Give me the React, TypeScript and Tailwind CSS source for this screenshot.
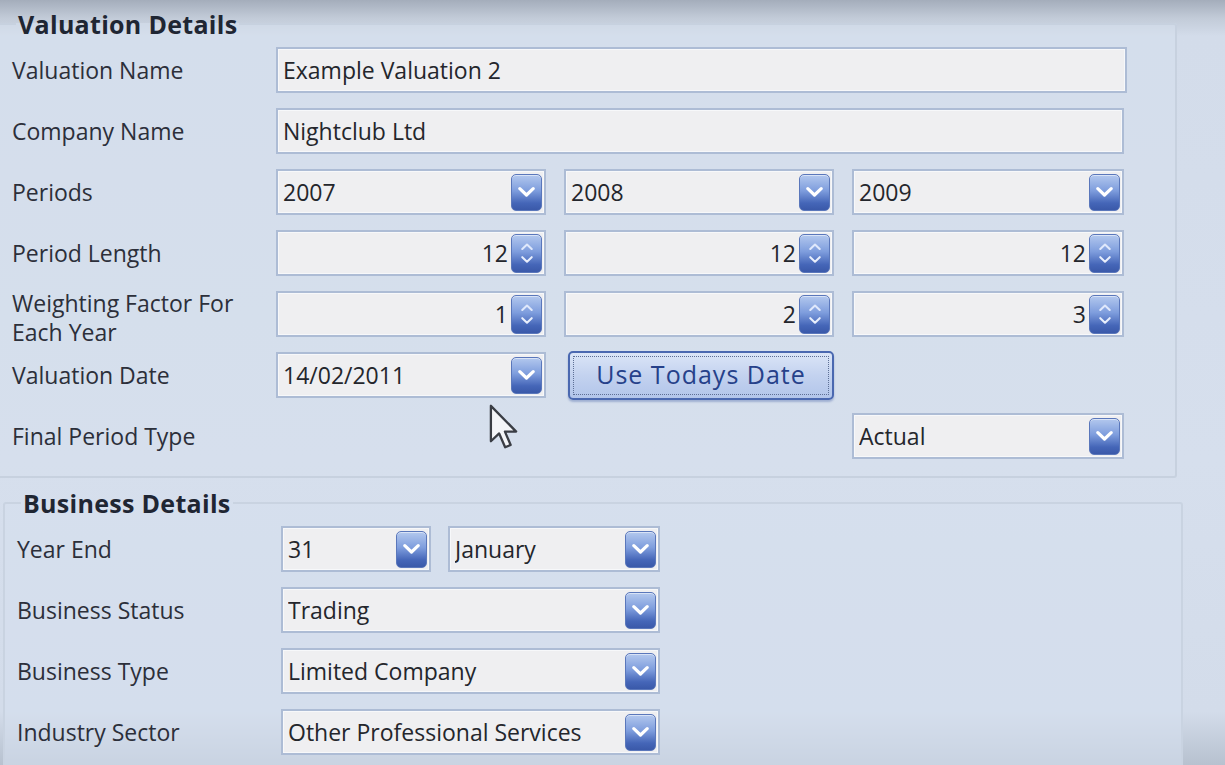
import React from "react";

const labelCls = "h-[46px] flex items-center text-[23px] text-[#2c2f3a] leading-[29px] whitespace-nowrap";

function Chevron({ up = false, size = 14, color = "#ffffff", weight = 2.4 }: { up?: boolean; size?: number; color?: string; weight?: number }) {
  const h = size * 0.6;
  return (
    <svg width={size} height={h} viewBox="0 0 14 8.4" className="block">
      <polyline
        points={up ? "1.5,7 7,1.8 12.5,7" : "1.5,1.4 7,6.6 12.5,1.4"}
        fill="none"
        stroke={color}
        strokeWidth={weight}
        strokeLinecap="round"
        strokeLinejoin="round"
      />
    </svg>
  );
}

function DropButton() {
  return (
    <div className="w-[31px] h-[37px] shrink-0 rounded-[5px] border border-[#5a77bb] bg-[linear-gradient(to_bottom,#b3c8ee,#7e9ddd_45%,#4566b8_80%,#3a59a9)] flex items-center justify-center shadow-[inset_0_1px_0_rgba(255,255,255,0.5)]">
      <Chevron size={17} weight={2.6} />
    </div>
  );
}

function SpinButton() {
  return (
    <div className="w-[31px] h-[39px] shrink-0 rounded-[5px] border border-[#5a77bb] bg-[linear-gradient(to_bottom,#b3c8ee,#7e9ddd_45%,#4566b8_80%,#3a59a9)] flex flex-col items-center justify-center gap-[6px] shadow-[inset_0_1px_0_rgba(255,255,255,0.5)]">
      <Chevron up size={12} color="#dfe8fb" />
      <Chevron size={12} color="#e9effc" />
    </div>
  );
}

function Field({ children, className = "" }: { children?: React.ReactNode; className?: string }) {
  return (
    <div
      className={
        "h-[46px] border-2 border-[#adbcd5] bg-[#efeff1] flex items-center pl-[5px] pr-[2px] text-[23px] text-[#24262c] shadow-[inset_0_0_0_1px_#f7f8fa] " +
        className
      }
    >
      {children}
    </div>
  );
}

function TextBox({ value, className = "" }: { value: string; className?: string }) {
  return (
    <Field className={className}>
      <span className="truncate">{value}</span>
    </Field>
  );
}

function Combo({ value, className = "" }: { value: string; className?: string }) {
  return (
    <Field className={className}>
      <span className="flex-1 truncate">{value}</span>
      <DropButton />
    </Field>
  );
}

function Spinner({ value }: { value: string }) {
  return (
    <Field>
      <span className="flex-1 text-right pr-[3px]">{value}</span>
      <SpinButton />
    </Field>
  );
}

function GroupTitle({ children }: { children: React.ReactNode }) {
  return (
    <legend className="ml-[4px] px-[2px] text-[25px] font-bold tracking-[0.3px] text-[#1f2633] leading-[30px]">
      {children}
    </legend>
  );
}

export default function App() {
  return (
    <div className="relative w-[1225px] h-[765px] overflow-hidden font-['Open_Sans',sans-serif] bg-[linear-gradient(to_bottom,#a4adbb,#c2cbd8_18px,#d3dcea_36px,#d6dfed_60%,#d3dcea_93%,#b7c1cf)]">
      <div className="flex flex-col pt-[9px] w-[1185px]">
        {/* Valuation details group */}
        <fieldset className="ml-[-4px] w-[1181px] h-[469px] border-2 border-[#c7d1df] rounded-[3px] bg-[#d5dfed]/60 pl-[14px]">
          <GroupTitle>Valuation Details</GroupTitle>
          <div className="grid grid-cols-[246px_270px_270px_272px] gap-x-[18px] gap-y-[15px] pt-[8px]">
            <div className={labelCls}>Valuation Name</div>
            <TextBox value="Example Valuation 2" className="col-span-3 mr-[-3px]" />

            <div className={labelCls}>Company Name</div>
            <TextBox value="Nightclub Ltd" className="col-span-3" />

            <div className={labelCls}>Periods</div>
            <Combo value="2007" />
            <Combo value="2008" />
            <Combo value="2009" />

            <div className={labelCls}>Period Length</div>
            <Spinner value="12" />
            <Spinner value="12" />
            <Spinner value="12" />

            <div className={labelCls + " pt-[8px]"}>
              <span>
                Weighting Factor For
                <br />
                Each Year
              </span>
            </div>
            <Spinner value="1" />
            <Spinner value="2" />
            <Spinner value="3" />

            <div className={labelCls}>Valuation Date</div>
            <Combo value="14/02/2011" />
            <div className="h-[46px] flex items-center">
              <button className="ml-[4px] w-[266px] h-[49px] shrink-0 rounded-[5px] border-2 border-[#4a68b0] bg-[linear-gradient(to_bottom,#dbe5f7,#c3d2ef_50%,#b2c5ea)] p-[3px] shadow-[0_2px_2px_rgba(60,90,160,0.35)]">
                <span className="flex h-full w-full items-center justify-center border border-dotted border-[#5d6f95] text-[25px] tracking-[1px] text-[#26418a]">
                  Use Todays Date
                </span>
              </button>
            </div>
            <div />

            <div className={labelCls}>Final Period Type</div>
            <div />
            <div />
            <Combo value="Actual" />
          </div>
        </fieldset>

        {/* Business details group */}
        <fieldset className="mt-[10px] ml-[3px] w-[1180px] h-[300px] border-2 border-[#c9d3e1] rounded-[3px] bg-[#d6e0ee]/60 pl-[12px]">
          <GroupTitle>Business Details</GroupTitle>
          <div className="grid grid-cols-[246px_379px] gap-x-[18px] gap-y-[15px] pt-[8px]">
            <div className={labelCls}>Year End</div>
            <div className="flex gap-[17px]">
              <Combo value="31" className="w-[150px]" />
              <Combo value="January" className="w-[212px]" />
            </div>

            <div className={labelCls}>Business Status</div>
            <Combo value="Trading" />

            <div className={labelCls}>Business Type</div>
            <Combo value="Limited Company" />

            <div className={labelCls}>Industry Sector</div>
            <Combo value="Other Professional Services" />
          </div>
        </fieldset>
      </div>

      {/* mouse pointer */}
      <svg
        className="absolute left-[489px] top-[404px]"
        width="30"
        height="46"
        viewBox="0 0 13 20"
      >
        <path
          d="M0.8 0.8 L0.8 16.2 L4.4 12.8 L7 18.8 L9.4 17.8 L6.9 12 L11.8 12 Z"
          fill="#f4f5f8"
          stroke="#3a3d44"
          strokeWidth="1"
          strokeLinejoin="round"
        />
      </svg>
    </div>
  );
}
